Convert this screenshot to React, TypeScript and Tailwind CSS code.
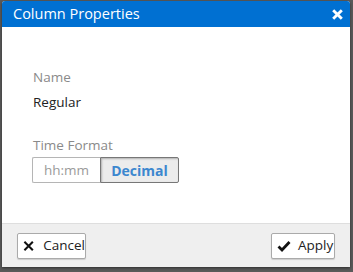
export default function App() {
  return (
    <div
      className="w-[353px] h-[272px] bg-[#5a5a5a] pl-[2px] pt-[1px] overflow-hidden"
      style={{ fontFamily: '"Open Sans", sans-serif' }}
    >
      <div className="w-[348px] h-[266px] bg-white rounded-t-[3px] flex flex-col shadow-[0_1px_3px_rgba(0,0,0,0.5)]">
        <div className="h-[26px] bg-[#0070d2] rounded-t-[3px] flex items-center justify-between pl-[11px] pr-[7px]">
          <span className="text-white text-[14.5px] leading-none">Column Properties</span>
          <svg width="11" height="11" viewBox="0 0 10 10">
            <path d="M2 2 L8 8 M8 2 L2 8" stroke="white" strokeWidth="2.6" strokeLinecap="square" />
          </svg>
        </div>
        <div className="flex-1 pl-[30px] pt-[41px]">
          <div className="pl-[1px] text-[13.5px] text-[#8a8a8a] leading-[18px]">Name</div>
          <div className="pl-[1px] text-[13.5px] text-[#222] leading-[18px] mt-[7px]">Regular</div>
          <div className="pl-[1px] text-[13.5px] text-[#8a8a8a] leading-[18px] mt-[25px]">Time Format</div>
          <div className="flex mt-[3px] h-[26px] w-[147px]">
            <div className="w-[68px] border border-[#b5b5b5] border-r-0 rounded-l-[2px] flex items-center justify-center text-[13.5px] text-[#9a9a9a] bg-white">
              hh:mm
            </div>
            <div className="flex-1 border border-[#777] rounded-r-[2px] bg-[#ececec] shadow-[inset_1px_1px_2px_rgba(0,0,0,0.25)] flex items-center justify-center text-[14px] font-bold text-[#3c87cf]">
              Decimal
            </div>
          </div>
        </div>
        <div className="h-[44px] bg-[#efefef] border-t border-[#dedede] flex items-center justify-between pl-[15px] pr-[15px]">
          <button className="h-[26px] w-[69px] bg-white border border-[#aaa] rounded-[2px] shadow-[0_1px_1px_rgba(0,0,0,0.15)] flex items-center gap-[9px] pl-[5px] text-[13.5px] text-[#222]">
            <svg width="12" height="12" viewBox="0 0 12 12">
              <path d="M1.5 1.5 L10.5 10.5 M10.5 1.5 L1.5 10.5" stroke="#111" strokeWidth="2.2" />
            </svg>
            Cancel
          </button>
          <button className="h-[26px] w-[64px] bg-white border border-[#aaa] rounded-[2px] shadow-[0_1px_1px_rgba(0,0,0,0.15)] flex items-center gap-[7px] pl-[5px] text-[13.5px] text-[#222]">
            <svg width="14" height="12" viewBox="0 0 14 12">
              <path d="M1.5 6.5 L5 10 L12.5 2" stroke="#111" strokeWidth="2.8" fill="none" />
            </svg>
            Apply
          </button>
        </div>
      </div>
    </div>
  );
}
